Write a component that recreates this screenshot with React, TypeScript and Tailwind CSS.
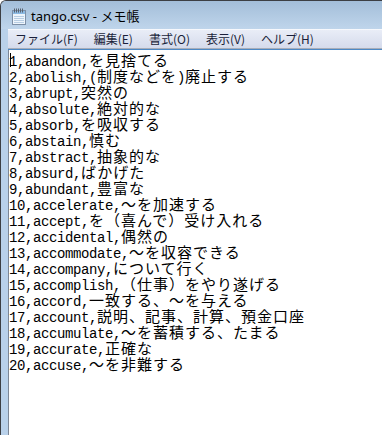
import React from "react";

const LINES = [
  "1,abandon,を見捨てる",
  "2,abolish,(制度などを)廃止する",
  "3,abrupt,突然の",
  "4,absolute,絶対的な",
  "5,absorb,を吸収する",
  "6,abstain,慎む",
  "7,abstract,抽象的な",
  "8,absurd,ばかげた",
  "9,abundant,豊富な",
  "10,accelerate,～を加速する",
  "11,accept,を（喜んで）受け入れる",
  "12,accidental,偶然の",
  "13,accommodate,～を収容できる",
  "14,accompany,について行く",
  "15,accomplish,（仕事）をやり遂げる",
  "16,accord,一致する、～を与える",
  "17,account,説明、記事、計算、預金口座",
  "18,accumulate,～を蓄積する、たまる",
  "19,accurate,正確な",
  "20,accuse,～を非難する",
];

const MENUS = ["ファイル(F)", "編集(E)", "書式(O)", "表示(V)", "ヘルプ(H)"];

type Run = { wide: boolean; text: string };

// half-width chars are 8px cells, full-width 16px, like the notepad font
function splitRuns(s: string): Run[] {
  const out: Run[] = [];
  for (const ch of s) {
    const wide = ch.charCodeAt(0) > 0xff;
    const last = out[out.length - 1];
    if (last && last.wide === wide) last.text += ch;
    else out.push({ wide, text: ch });
  }
  return out;
}

const NotepadIcon = () => (
  <svg width="14" height="17" viewBox="0 0 14 17">
    <rect x="0.5" y="2.5" width="13" height="14" fill="#eef5fc" stroke="#7d8fa6" />
    <rect x="1" y="3" width="12" height="3" fill="#8dbbe4" />
    {[2, 4, 6, 8, 10].map((x) => (
      <rect key={x} x={x} y="0.5" width="1" height="4" fill="#5a6370" />
    ))}
    {[8, 10, 12, 14].map((y) => (
      <rect key={y} x="2" y={y} width="10" height="1" fill="#b7cde3" />
    ))}
  </svg>
);

const TextLine: React.FC<{ text: string; caret?: boolean }> = ({ text, caret }) => (
  <div className="relative h-[16px] leading-[16px] whitespace-pre text-black">
    {splitRuns(text).map((r, i) => (
      <span
        key={i}
        className={
          r.wide
            ? "font-['Noto_Sans_CJK_JP',sans-serif] text-[15px] tracking-[1px] leading-[16px]"
            : "font-['Liberation_Mono',monospace] text-[14px] tracking-[-0.4px] leading-[16px]"
        }
      >
        {r.text}
      </span>
    ))}
    {caret && <span className="absolute left-[1px] top-[1px] h-[14px] w-px bg-black" />}
  </div>
);

export default function App() {
  return (
    <div className="w-[382px] h-[435px] overflow-hidden flex flex-col bg-[#b9d1ea] border-t border-l border-[#3c3f44] rounded-tl-[6px]">
      {/* title bar */}
      <div className="h-[28px] shrink-0 flex items-center pl-[11px] pt-[3px] gap-[5px] bg-gradient-to-b from-[#a3bed9] to-[#bfd5eb]">
        <NotepadIcon />
        <span className="font-['Noto_Sans','Noto_Sans_CJK_JP',sans-serif] text-[13px] text-black leading-none">
          tango.csv - メモ帳
        </span>
      </div>

      <div className="flex flex-1 min-h-0">
        <div className="w-[7px] shrink-0" />
        <div className="flex-1 flex flex-col min-w-0">
          {/* menu bar */}
          <div className="h-[20px] shrink-0 flex items-center pl-[7px] gap-[16px] border-t border-[#f6f8fc] bg-gradient-to-b from-[#e9edf7] to-[#d5dbec] border-b border-b-[#a8adb9]">
            {MENUS.map((m) => (
              <span
                key={m}
                className="font-['Noto_Sans_CJK_JP',sans-serif] text-[12px] leading-none text-[#1a1f3a]"
              >
                {m}
              </span>
            ))}
          </div>
          <div className="h-px shrink-0 bg-[#4c89c6]" />
          {/* edit area */}
          <div className="flex-1 bg-white border-l border-[#7d8796] pt-[2px]">
            {LINES.map((l, i) => (
              <TextLine key={i} text={l} caret={i === 0} />
            ))}
          </div>
        </div>
      </div>
    </div>
  );
}
